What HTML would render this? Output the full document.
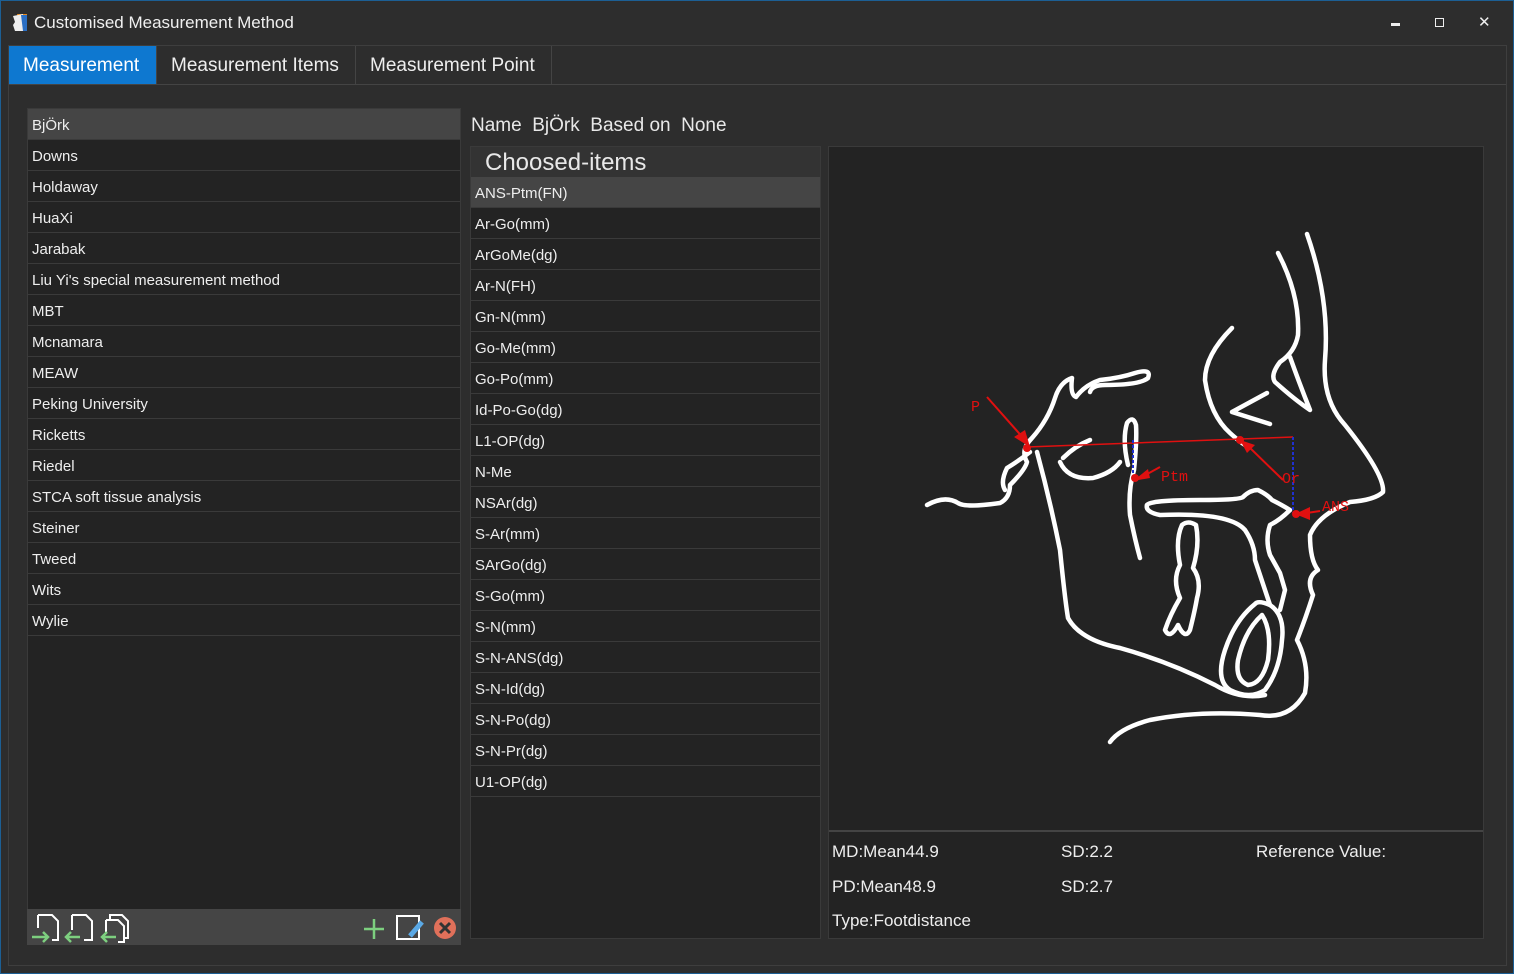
<!DOCTYPE html>
<html><head><meta charset="utf-8"><style>
*{box-sizing:border-box;margin:0;padding:0}
body{width:1514px;height:974px;background:#2d2d2d;font-family:"Liberation Sans",sans-serif;color:#e8e8e8;position:relative;overflow:hidden}
.abs{position:absolute}
.title{left:34px;top:13px;font-size:17px;color:#f0f0f0}
.tabframe{left:8px;top:45px;width:1499px;height:921px;border:1px solid #3e3e3e}
.tab{top:46px;height:39px;font-size:19px;line-height:40px;padding:0 14px;border-right:1px solid #444;border-bottom:1px solid #444;color:#eee}
.pane{left:9px;top:84px;width:1497px;height:1px;background:#444}
.list{background:#232323;border:1px solid #3a3a3a}
.row{height:31px;line-height:33px;overflow:hidden;font-size:15px;padding-left:4px;border-bottom:1px solid #3a3a3a;color:#eee}
.sel{background:#454545}
.info{font-size:17px;color:#eee}
</style></head><body>
<div class="abs" style="left:0;top:0;width:1514px;height:974px;border:1px solid #1c5f94;pointer-events:none;z-index:5"></div>
<svg class="abs" style="left:11px;top:13px" width="18" height="19"><path d="M6 1 L16 1 L16 18 L10 18Z" fill="#e88a1c"/><path d="M2 3 L12 1 L12 18 L4 18 L2 12 L4 9Z" fill="#eee"/><path d="M10 2 L16 2 L16 18 L12 18Z" fill="#2b6fc4"/></svg>
<div class="abs title">Customised Measurement Method</div>
<div class="abs" style="left:1391px;top:23px;width:9px;height:3px;background:#eee"></div>
<div class="abs" style="left:1435px;top:18px;width:9px;height:9px;border:1.5px solid #eee"></div>
<div class="abs" style="left:1478px;top:13px;font-size:15px;color:#eee">✕</div>
<div class="abs tabframe"></div>
<div class="abs tab" style="left:9px;width:148px;background:#0e78d0;color:#fff">Measurement</div>
<div class="abs tab" style="left:157px;width:199px">Measurement Items</div>
<div class="abs tab" style="left:356px;width:196px">Measurement Point</div>
<div class="abs pane"></div>

<div class="abs list" style="left:27px;top:108px;width:434px;height:837px">
<div class="row sel">BjÖrk</div><div class="row">Downs</div><div class="row">Holdaway</div><div class="row">HuaXi</div><div class="row">Jarabak</div><div class="row">Liu Yi's special measurement method</div><div class="row">MBT</div><div class="row">Mcnamara</div><div class="row">MEAW</div><div class="row">Peking University</div><div class="row">Ricketts</div><div class="row">Riedel</div><div class="row">STCA soft tissue analysis</div><div class="row">Steiner</div><div class="row">Tweed</div><div class="row">Wits</div><div class="row">Wylie</div>
</div>
<div class="abs" style="left:27px;top:909px;width:434px;height:36px;background:#454545"></div>
<svg class="abs" style="left:30px;top:912px" width="430" height="32" fill="none">
<g stroke="#fff" stroke-width="2"><path d="M8 3 H22 L28 9 V28 H22 M8 3 V16"/><path d="M42 3 H56 L62 9 V28 H54 M42 3 V18"/><path d="M76 8 H88 L94 14 V30 H88 M76 8 V20 M80 8 V3 H92 L98 9 V26 H94"/></g>
<g stroke="#7dcf7f" stroke-width="2.5"><path d="M2 25 H18 M13 20 L18 25 L13 30"/><path d="M50 25 H36 M41 20 L36 25 L41 30"/><path d="M86 25 H72 M77 20 L72 25 L77 30"/><path d="M344 7 V27 M334 17 H354"/></g>
<rect x="367" y="4" width="22" height="23" stroke="#fff" stroke-width="2"/>
<path d="M380 24 L392 10" stroke="#5aa9e6" stroke-width="5"/>
<circle cx="415" cy="16" r="11" fill="#e0705a"/><path d="M410 11 L420 21 M420 11 L410 21" stroke="#333" stroke-width="3"/>
</svg>

<div class="abs" style="left:471px;top:115px;font-size:19px">Name&nbsp; BjÖrk&nbsp; Based on&nbsp; None</div>
<div class="abs" style="left:470px;top:146px;width:351px;height:793px;background:#232323;border:1px solid #3a3a3a"></div>
<div class="abs" style="left:471px;top:147px;width:349px;height:30px;background:#333;font-size:24px;line-height:31px;padding-left:14px">Choosed-items</div>
<div class="abs" style="left:471px;top:177px;width:349px">
<div class="row sel">ANS-Ptm(FN)</div><div class="row">Ar-Go(mm)</div><div class="row">ArGoMe(dg)</div><div class="row">Ar-N(FH)</div><div class="row">Gn-N(mm)</div><div class="row">Go-Me(mm)</div><div class="row">Go-Po(mm)</div><div class="row">Id-Po-Go(dg)</div><div class="row">L1-OP(dg)</div><div class="row">N-Me</div><div class="row">NSAr(dg)</div><div class="row">S-Ar(mm)</div><div class="row">SArGo(dg)</div><div class="row">S-Go(mm)</div><div class="row">S-N(mm)</div><div class="row">S-N-ANS(dg)</div><div class="row">S-N-Id(dg)</div><div class="row">S-N-Po(dg)</div><div class="row">S-N-Pr(dg)</div><div class="row">U1-OP(dg)</div>
</div>

<div class="abs" style="left:828px;top:146px;width:656px;height:793px;background:#232323;border:1px solid #3a3a3a"></div>
<div class="abs" style="left:829px;top:830px;width:654px;height:2px;background:#444"></div>
<svg class="abs" style="left:828px;top:146px" width="656" height="684" viewBox="828 146 656 684" fill="none">
<g stroke="#fff" stroke-width="4.5" stroke-linecap="round" stroke-linejoin="round">
<path d="M1307 234 Q1330 300 1325 360 Q1322 400 1345 425 Q1385 475 1383 492 Q1375 500 1350 502 Q1318 515 1310 535 Q1310 560 1318 570 Q1305 578 1313 595 Q1305 620 1297 640 Q1310 665 1305 693 Q1290 720 1260 715 Q1200 710 1150 720 Q1120 728 1110 742"/>
<path d="M1278 253 Q1300 295 1298 335 Q1295 352 1280 362 Q1270 375 1275 382 Q1295 400 1310 410 Q1300 385 1290 357"/>
<path d="M1232 328 Q1205 355 1205 380 Q1210 415 1230 433 Q1240 442 1245 445"/>
<path d="M1267 393 L1232 412 L1270 424"/>
<path d="M1037 452 Q1050 500 1060 550 Q1065 600 1068 618 Q1080 640 1120 648 Q1170 662 1215 685 Q1240 700 1265 695"/>
<path d="M927 505 Q945 495 958 503 Q965 508 1000 503 Q1010 498 1010 485 Q1025 470 1027 462 Q1020 450 1032 438 Q1048 420 1055 398 Q1060 382 1072 378 Q1070 395 1076 397 Q1085 385 1100 380 Q1120 378 1135 373 Q1152 368 1148 378 Q1140 385 1105 385 Q1092 385 1090 392"/>
<path d="M1030 452 Q1020 460 1007 468 Q1000 482 1005 490"/>
<path d="M1063 458 Q1075 446 1090 440"/>
<path d="M1060 462 Q1068 480 1093 478 Q1112 473 1120 462"/>
<path d="M1128 465 Q1122 440 1127 423 Q1133 415 1136 425 Q1137 440 1134 470 Q1128 490 1130 515 Q1135 540 1140 558"/>
<path d="M1147 505 Q1150 500 1200 500 Q1240 500 1243 497 Q1250 490 1258 490 Q1268 495 1272 500 Q1282 505 1290 510 Q1280 520 1270 525 Q1265 540 1270 555 L1280 573 L1285 590 L1280 610"/>
<path d="M1147 505 Q1145 512 1160 515 Q1230 512 1245 530 Q1255 545 1255 560 Q1260 575 1265 590 L1270 605"/>
<path d="M1255 604 Q1235 620 1225 650 Q1215 680 1230 690 Q1250 700 1265 690 Q1280 670 1282 640 Q1285 615 1270 605 Q1258 600 1255 604"/>
<path d="M1262 615 Q1245 630 1238 660 Q1235 680 1248 685 Q1262 684 1268 660 Q1272 630 1262 615"/>
<path d="M1182 525 Q1175 540 1180 565 Q1172 580 1180 598 Q1170 615 1165 630 Q1170 640 1178 625 Q1185 640 1190 630 Q1195 610 1197 598 Q1202 580 1193 568 Q1200 545 1196 525 Q1188 520 1182 525"/>
</g>
<g stroke="#e01010" stroke-width="1.5"><path d="M1027 447 L1293 437"/></g>
<g stroke="#2030d0" stroke-width="2" stroke-dasharray="3 2"><path d="M1293 437 V513 M1133 440 V477"/></g>
<g stroke="#e01010" stroke-width="2"><path d="M987 397 L1025 440 M1300 514 L1320 511 M1160 467 L1140 478 M1283 480 L1247 445"/></g>
<g fill="#e01010"><path d="M1030 447 L1014 437 L1025 430Z"/><circle cx="1027" cy="448" r="4"/><path d="M1133 481 L1148 469 L1150 478Z"/><circle cx="1135" cy="478" r="4"/><path d="M1240 440 L1255 445 L1247 453Z"/><circle cx="1240" cy="440" r="4"/><path d="M1295 514 L1310 507 L1310 520Z"/><circle cx="1296" cy="514" r="4"/></g>
<g fill="#e01010" font-family="Liberation Mono,monospace" font-size="15"><text x="971" y="411">P</text><text x="1161" y="481">Ptm</text><text x="1282" y="483">Or</text><text x="1322" y="511">ANS</text></g>
</svg>
<div class="abs info" style="left:832px;top:842px">MD:Mean44.9</div>
<div class="abs info" style="left:1061px;top:842px">SD:2.2</div>
<div class="abs info" style="left:1256px;top:842px">Reference Value:</div>
<div class="abs info" style="left:832px;top:877px">PD:Mean48.9</div>
<div class="abs info" style="left:1061px;top:877px">SD:2.7</div>
<div class="abs info" style="left:832px;top:911px">Type:Footdistance</div>
</body></html>
